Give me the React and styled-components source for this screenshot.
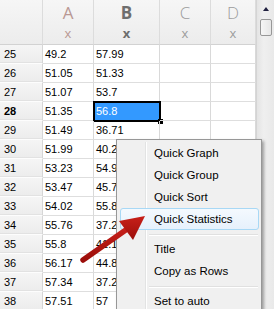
import React from "react";
import styled, { createGlobalStyle } from "styled-components";

const rows = [
  [25, "49.2", "57.99"],
  [26, "51.05", "51.33"],
  [27, "51.07", "53.7"],
  [28, "51.35", "56.8"],
  [29, "51.49", "36.71"],
  [30, "51.99", "40.25"],
  [31, "53.23", "54.91"],
  [32, "53.47", "45.77"],
  [33, "54.02", "55.83"],
  [34, "55.76", "37.22"],
  [35, "55.8", "41.13"],
  [36, "56.17", "44.85"],
  [37, "57.34", "37.26"],
  [38, "57.51", "57"],
];

const columns = [
  { name: "A", tone: "pink" },
  { name: "B", tone: "bold" },
  { name: "C", tone: "light" },
  { name: "D", tone: "light" },
];

const menu = [
  { label: "Quick Graph" },
  { label: "Quick Group" },
  { label: "Quick Sort" },
  { label: "Quick Statistics", hover: true },
  { sep: true },
  { label: "Title" },
  { label: "Copy as Rows" },
  { sep: true },
  { label: "Set to auto" },
];

export default function App() {
  return (
    <>
      <GlobalStyle />
      <Window>
        <Sheet>
          <Corner />
          {columns.map((c) => (
            <ColHead key={c.name} $tone={c.tone}>
              <Letter $tone={c.tone}>{c.name}</Letter>
              <Kind>x</Kind>
            </ColHead>
          ))}
          {rows.map(([n, a, b]) => (
            <React.Fragment key={n}>
              <RowHead $active={n === 28}>{n}</RowHead>
              <Cell>{a}</Cell>
              <Cell $selected={n === 28}>{b}</Cell>
              <Cell />
              <Cell />
            </React.Fragment>
          ))}
        </Sheet>
        <Scrollbar>
          <UpArrow />
          <Thumb />
        </Scrollbar>

        <Menu>
          {menu.map((m, i) =>
            m.sep ? (
              <Separator key={i} />
            ) : (
              <MenuItem key={i} $hover={m.hover}>
                {m.label}
              </MenuItem>
            )
          )}
        </Menu>

        <Arrow viewBox="0 0 70 50" width="70" height="50">
          <defs>
            <linearGradient id="red" x1="0" y1="0" x2="0" y2="1">
              <stop offset="0" stopColor="#c8201a" />
              <stop offset="1" stopColor="#9c0e0a" />
            </linearGradient>
          </defs>
          <line x1="3" y1="47" x2="50" y2="14" stroke="url(#red)" strokeWidth="5.5" strokeLinecap="round" />
          <polygon points="65,3 39,8 53,27" fill="url(#red)" />
        </Arrow>
      </Window>
    </>
  );
}

const GlobalStyle = createGlobalStyle`
  html, body {
    margin: 0;
    padding: 0;
    background: #ffffff;
    overflow: hidden;
  }
  body {
    font-family: "Liberation Sans", Arial, sans-serif;
  }
`;

const Window = styled.div`
  position: relative;
  width: 274px;
  height: 309px;
  display: flex;
  overflow: hidden;
  background: #fff;
`;

const Sheet = styled.div`
  display: grid;
  grid-template-columns: 43px 51px 66px 51px 45px;
  grid-auto-rows: 19px;
  grid-template-rows: 45px;
  align-content: start;
  width: 256px;
`;

const Corner = styled.div`
  box-sizing: border-box;
  background: linear-gradient(#f6f6f6, #ececec);
  border-right: 1px solid #dcdcdc;
  border-bottom: 1px solid #d2d2d2;
`;

const toneColor = { pink: "#b99893", bold: "#6e6e6e", light: "#9c9c9c" };

const ColHead = styled.div`
  box-sizing: border-box;
  display: flex;
  flex-direction: column;
  align-items: center;
  background: linear-gradient(#f6f6f6, #ececec);
  border-right: 1px solid #dcdcdc;
  border-bottom: 1px solid #d2d2d2;
  color: ${({ $tone }) => toneColor[$tone]};
  font-family: "Open Sans", "Liberation Sans", sans-serif;
  font-weight: ${({ $tone }) => ($tone === "bold" ? 700 : 400)};
`;

const Letter = styled.span`
  display: block;
  font-size: 17px;
  line-height: 23px;
  margin-top: 1px;
  font-weight: ${({ $tone }) => ($tone === "light" ? 300 : "inherit")};
`;

const Kind = styled.span`
  display: block;
  font-size: 13px;
  line-height: 18px;
`;

const RowHead = styled.div`
  box-sizing: border-box;
  background: linear-gradient(#f5f5f5, #ececec);
  border-right: 1px solid #d6d6d6;
  border-bottom: 1px solid #fdfdfd;
  box-shadow: inset 0 -1px 0 #e2e2e2;
  font-size: 11px;
  line-height: 19px;
  padding-left: 4px;
  color: #000;
  font-weight: ${({ $active }) => ($active ? 700 : 400)};
`;

const Cell = styled.div`
  position: relative;
  box-sizing: border-box;
  border-right: 1px solid #d9d9d9;
  border-bottom: 1px solid #dedede;
  font-size: 11px;
  line-height: 18px;
  padding-left: 2px;
  white-space: nowrap;
  overflow: hidden;
  color: ${({ $selected }) => ($selected ? "#fff" : "#000")};
  background: ${({ $selected }) => ($selected ? "#3399ff" : "transparent")};
  ${({ $selected }) =>
    $selected &&
    `
    overflow: visible;
    outline: 2px solid #000;
    outline-offset: -1px;
    &::after {
      content: "";
      position: absolute;
      right: -4px;
      bottom: -4px;
      width: 5px;
      height: 5px;
      background: #000;
    }
  `}
`;

const Scrollbar = styled.div`
  flex: 1;
  display: flex;
  flex-direction: column;
  align-items: center;
  background: linear-gradient(90deg, #e4e4e4, #efefef 40%, #e9e9e9);
  border-left: 1px solid #d4d4d4;
`;

const UpArrow = styled.div`
  margin-top: 7px;
  width: 0;
  height: 0;
  border-left: 3px solid transparent;
  border-right: 3px solid transparent;
  border-bottom: 4px solid #202040;
`;

const Thumb = styled.div`
  margin-top: 8px;
  width: 10px;
  height: 15px;
  border: 1px solid #979797;
  border-radius: 2px;
  background: linear-gradient(90deg, #f6f6f6, #e6e6e6);
`;

const Menu = styled.div`
  position: absolute;
  left: 116px;
  top: 139px;
  width: 146px;
  height: 190px;
  box-sizing: border-box;
  padding: 2px 2px;
  background: #f0f0f0;
  border: 1px solid #979797;
  box-shadow: 2px 2px 3px rgba(0, 0, 0, 0.35);
  display: flex;
  flex-direction: column;
  &::before {
    content: "";
    position: absolute;
    left: 28px;
    top: 2px;
    bottom: 0;
    width: 1px;
    background: #e2e3e3;
    box-shadow: 1px 0 0 #ffffff;
  }
`;

const MenuItem = styled.div`
  position: relative;
  box-sizing: border-box;
  height: 22px;
  line-height: 20px;
  padding-left: 33px;
  font-size: 11.5px;
  color: #000;
  border: 1px solid ${({ $hover }) => ($hover ? "#a8d8f5" : "transparent")};
  border-radius: 3px;
  margin-left: 1px;
  background: ${({ $hover }) =>
    $hover ? "linear-gradient(#f4f9fe, #e6f1fc)" : "transparent"};
`;

const Separator = styled.div`
  margin: 4px 1px 3px 30px;
  height: 1px;
  background: #e0e0e0;
  box-shadow: 0 1px 0 #ffffff;
`;

const Arrow = styled.svg`
  position: absolute;
  left: 80px;
  top: 213px;
`;
